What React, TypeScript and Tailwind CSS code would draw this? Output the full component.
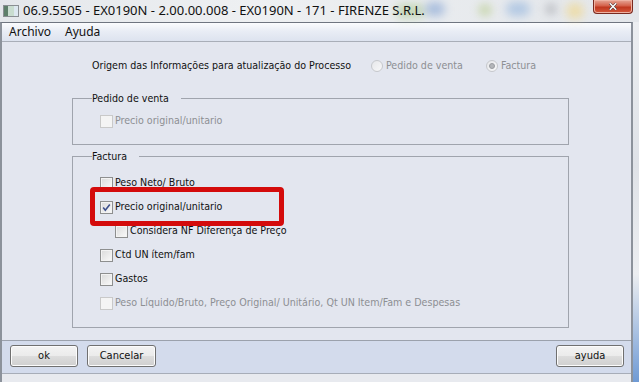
import { useState } from "react";

const uiFont = { fontFamily: '"DejaVu Sans Condensed", "Liberation Sans", sans-serif' };

function CheckBox({ checked, disabled }: { checked?: boolean; disabled?: boolean }) {
  return (
    <span
      className={
        "relative flex h-[13px] w-[13px] shrink-0 items-center justify-center border " +
        (disabled
          ? "border-[#c9c9c9] bg-[#f4f4f4]"
          : "border-[#8e8f8f] bg-gradient-to-br from-[#dadada] to-[#fafafa] shadow-[inset_0_0_0_1px_#f3f3f3]")
      }
    >
      {checked && (
        <svg viewBox="0 0 11 11" className="h-[11px] w-[11px]">
          <path d="M2.2 5.6 L4.3 8.2 L8.8 2.4" fill="none" stroke="#3d4f8c" strokeWidth="1.6" />
        </svg>
      )}
    </span>
  );
}

function Radio({ selected }: { selected?: boolean }) {
  return (
    <span className="flex h-[12px] w-[12px] shrink-0 items-center justify-center rounded-full border border-[#c6c8cc] bg-gradient-to-br from-[#e6e7ea] to-[#f8f8f9]">
      {selected && <span className="h-[6px] w-[6px] rounded-full border border-[#9a9ca1] bg-[#b4b6ba]" />}
    </span>
  );
}

function Row({
  label,
  checked,
  disabled,
  indent,
}: {
  label: string;
  checked?: boolean;
  disabled?: boolean;
  indent?: boolean;
}) {
  const [on, setOn] = useState(!!checked);
  return (
    <div
      className={"flex h-[24px] items-center gap-[2px] " + (indent ? "pl-[42px]" : "pl-[27px]")}
      onClick={() => !disabled && setOn(!on)}
    >
      <CheckBox checked={on} disabled={disabled} />
      <span className={disabled ? "text-[#8d8f93]" : "text-[#111]"}>{label}</span>
    </div>
  );
}

function Button({ label, width }: { label: string; width: string }) {
  return (
    <button
      type="button"
      className={
        "flex h-[22px] items-center justify-center rounded-[3px] border border-[#707070] bg-[linear-gradient(#f3f3f3_0%,#ebebeb_50%,#dddddd_51%,#cfcfcf_100%)] text-[11px] text-[#111] shadow-[inset_0_0_0_1px_#fcfcfc] " +
        width
      }
    >
      {label}
    </button>
  );
}

export default function App() {
  return (
    <div className="relative flex h-[382px] w-[639px] flex-col overflow-hidden bg-[linear-gradient(90deg,#e4e7eb,#eef0f2_40%,#e3e6ea)] text-[10.6px]" style={uiFont}>
      {/* blurred desktop behind the glass title bar */}
      <div className="absolute left-[395px] top-[4px] h-[14px] w-[30px] rounded-full bg-[#9fc27d] opacity-50 blur-[5px]" />
      <div className="absolute left-[425px] top-[2px] h-[14px] w-[20px] rounded-full bg-[#7e9fd2] opacity-60 blur-[5px]" />
      <div className="absolute left-[478px] top-[4px] h-[12px] w-[14px] rounded-full bg-[#b8cc8c] opacity-60 blur-[4px]" />
      <div className="absolute left-[506px] top-[2px] h-[14px] w-[24px] rounded-full bg-[#8fb2dd] opacity-60 blur-[5px]" />
      <div className="absolute left-[545px] top-[3px] h-[12px] w-[12px] rounded-full bg-[#9a9ca2] opacity-50 blur-[4px]" />
      <div className="absolute left-[566px] top-[3px] h-[16px] w-[18px] rounded-full bg-[#f1d88e] opacity-70 blur-[5px]" />

      {/* title bar */}
      <div className="relative flex h-[22px] shrink-0 items-center">
        <svg viewBox="0 0 16 12" className="ml-[3px] h-[12px] w-[16px]">
          <rect x="0.5" y="0.5" width="15" height="11" fill="#f2f4f2" stroke="#8a8f93" />
          <rect x="1" y="1" width="4" height="10" fill="#5d7f6a" />
          <rect x="5" y="1" width="10" height="10" fill="#c9ddd0" />
          <rect x="11" y="1" width="4" height="10" fill="#dde8f0" />
        </svg>
        <span className="ml-[4px] text-[13px] text-[#111]" style={{ fontFamily: '"Noto Sans", "Open Sans", sans-serif' }}>
          06.9.5505 - EX0190N - 2.00.00.008 - EX0190N - 171 - FIRENZE S.R.L.
        </span>
        <div className="absolute right-[6px] top-0 flex h-[14px] w-[40px] items-center justify-center rounded-b-[4px] border border-t-0 border-[#7a2a20] bg-[linear-gradient(#e6a797_0%,#d4614a_45%,#c0381f_55%,#d55a3e_100%)] shadow-[inset_0_0_0_1px_#eeb2a2]">
          <svg viewBox="0 0 12 10" className="h-[9px] w-[12px]">
            <path d="M2.5 1.5 L9.5 8.5 M9.5 1.5 L2.5 8.5" stroke="#4b3a3a" strokeWidth="2.8" />
            <path d="M2.5 1.5 L9.5 8.5 M9.5 1.5 L2.5 8.5" stroke="#ffffff" strokeWidth="1.6" />
          </svg>
        </div>
      </div>

      <div className="flex min-h-0 flex-1">
        {/* window */}
        <div className="flex w-[633px] flex-col border-x-2 border-t border-[#8c929b] border-t-[#6f7580]">
          {/* menu bar */}
          <div className="flex h-[19px] shrink-0 items-center gap-[14px] border-b border-[#a9aeb8] bg-[linear-gradient(#fbfcfe,#e9edf5_45%,#dde3ef)] pl-[7px] text-[12px] text-[#111]" style={{ fontFamily: '"Noto Sans", "Open Sans", sans-serif' }}>
            <span>Archivo</span>
            <span>Ayuda</span>
          </div>

          {/* content */}
          <div className="relative flex h-[299px] shrink-0 flex-col border-b border-[#9ba1ac] bg-[#e3e6ef]">
            <div className="mt-[16px] flex h-[16px] items-center pl-[90px]">
              <span className="w-[279px] text-[#111]">Origem das Informações para atualização do Processo</span>
              <Radio />
              <span className="ml-[3px] w-[100px] text-[#8d8f93]">Pedido de venta</span>
              <Radio selected />
              <span className="ml-[3px] text-[#8d8f93]">Factura</span>
            </div>

            <div className="relative ml-[70px] mt-[24px] h-[47px] w-[497px] border border-[#a0a4ad]">
              <span className="absolute -top-[8px] left-[19px] bg-[#e3e6ef] pr-[12px] text-[#111]">Pedido de venta</span>
              <div className="pt-[10px]">
                <Row label="Precio original/unitario" disabled />
              </div>
            </div>

            <div className="relative ml-[70px] mt-[11px] h-[172px] w-[497px] border border-[#a0a4ad]">
              <span className="absolute -top-[8px] left-[19px] bg-[#e3e6ef] pr-[12px] text-[#111]">Factura</span>
              <div className="pt-[14px]">
                <Row label="Peso Neto/ Bruto" />
                <Row label="Precio original/unitario" checked />
                <Row label="Considera NF Diferença de Preço" indent />
                <Row label="Ctd UN ítem/fam" />
                <Row label="Gastos" />
                <Row label="Peso Líquido/Bruto, Preço Original/ Unitário, Qt UN Item/Fam e Despesas" disabled />
              </div>
            </div>

            {/* red highlight annotation */}
            <div className="pointer-events-none absolute left-[88px] top-[145px] h-[39px] w-[194px] rounded-[4px] border-[5px] border-[#d40b0b]" />
          </div>

          {/* footer */}
          <div className="flex h-[33px] shrink-0 items-start border-b border-[#a7adb8] bg-[#d3dbec] pl-[8px] pr-[7px] pt-[4px]">
            <Button label="ok" width="w-[68px]" />
            <div className="w-[9px]" />
            <Button label="Cancelar" width="w-[69px]" />
            <div className="flex-1" />
            <Button label="ayuda" width="w-[68px]" />
          </div>
          <div className="flex-1 bg-[#e8eaef]" />
        </div>

        {/* desktop strip at the right */}
        <div className="relative flex-1 bg-[linear-gradient(#eceef1,#dfe2e7_40%,#eceef1_70%,#6f9ad4)]" />
      </div>
    </div>
  );
}
